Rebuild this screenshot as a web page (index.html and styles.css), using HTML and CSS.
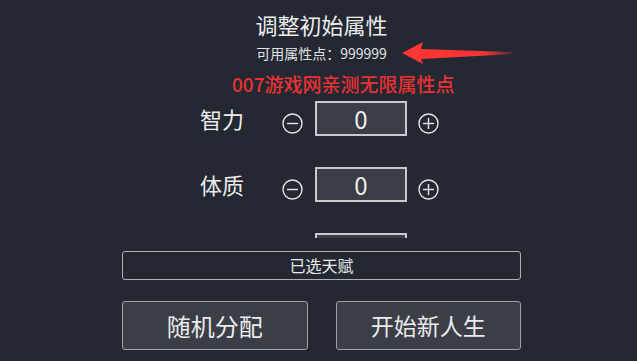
FILE: index.html
```html
<!DOCTYPE html>
<html lang="zh-CN">
<head>
  <meta charset="UTF-8">
  <meta name="viewport" content="width=device-width, initial-scale=1.0">
  <title>调整初始属性</title>
  <link rel="stylesheet" href="styles.css">
</head>
<body>
  <div class="page">
    <h1 class="title">调整初始属性</h1>
    <p class="points">可用属性点：999999</p>

    <div class="attrs">
      <div class="attr-row">
        <span class="attr-name">智力</span>
        <svg class="step minus" viewBox="0 0 21 21"><circle cx="10.5" cy="10.5" r="9.5"/><line x1="5" y1="10.5" x2="16" y2="10.5"/></svg>
        <div class="attr-value">0</div>
        <svg class="step plus" viewBox="0 0 21 21"><circle cx="10.5" cy="10.5" r="9.5"/><line x1="5" y1="10.5" x2="16" y2="10.5"/><line x1="10.5" y1="5" x2="10.5" y2="16"/></svg>
      </div>
      <div class="attr-row">
        <span class="attr-name">体质</span>
        <svg class="step minus" viewBox="0 0 21 21"><circle cx="10.5" cy="10.5" r="9.5"/><line x1="5" y1="10.5" x2="16" y2="10.5"/></svg>
        <div class="attr-value">0</div>
        <svg class="step plus" viewBox="0 0 21 21"><circle cx="10.5" cy="10.5" r="9.5"/><line x1="5" y1="10.5" x2="16" y2="10.5"/><line x1="10.5" y1="5" x2="10.5" y2="16"/></svg>
      </div>
      <!-- 下一行只露出输入框的上边 -->
      <div class="attr-row">
        <span class="attr-name"></span>
        <svg class="step minus" viewBox="0 0 21 21"><circle cx="10.5" cy="10.5" r="9.5"/><line x1="5" y1="10.5" x2="16" y2="10.5"/></svg>
        <div class="attr-value"></div>
        <svg class="step plus" viewBox="0 0 21 21"><circle cx="10.5" cy="10.5" r="9.5"/><line x1="5" y1="10.5" x2="16" y2="10.5"/><line x1="10.5" y1="5" x2="10.5" y2="16"/></svg>
      </div>
    </div>

    <div class="talents">已选天赋</div>

    <div class="actions">
      <button class="btn">随机分配</button>
      <button class="btn btn-start">开始新人生</button>
    </div>
  </div>

  <!-- 水印和箭头 -->
  <div class="watermark">007游戏网亲测无限属性点</div>
  <svg class="arrow" width="116" height="26" viewBox="0 0 116 26">
    <defs>
      <linearGradient id="fade" x1="0" y1="0" x2="1" y2="0">
        <stop offset="0" stop-color="#ff3535"/>
        <stop offset="0.75" stop-color="#f83434"/>
        <stop offset="1" stop-color="#f83434" stop-opacity="0.2"/>
      </linearGradient>
    </defs>
    <polygon points="2,13 23,2 21,9 113,12 113,14 21,19 23,24" fill="url(#fade)"/>
  </svg>
</body>
</html>
```

FILE: styles.css
```css
body {
  margin: 0;
  padding: 0;
  background-color: #232833;
  color: #e8e8e8;
  font-family: "Noto Sans CJK SC", "Noto Sans", sans-serif;
  height: 361px;
  overflow: hidden;
}
.page {
  width: 399px;
  margin-left: 122px;
  padding-top: 11px;
}
.title {
  margin: 0;
  font-size: 22px;
  line-height: 26px;
  font-weight: normal;
  text-align: center;
  color: #ececec;
}
.points {
  margin: 7px 0 0;
  font-size: 14px;
  line-height: 18px;
  text-align: center;
  color: #e2e2e2;
}
.attrs {
  margin-top: 39px;
  height: 137px;
  overflow: hidden;
}
.attr-row {
  display: flex;
  align-items: center;
  height: 35px;
  padding-left: 78px;
  margin-bottom: 31px;
}
.attr-name {
  width: 44px;
  font-size: 22px;
  line-height: 35px;
  color: #ececec;
}
.step {
  width: 21px;
  height: 21px;
  margin-top: 9px;
  fill: none;
  stroke: #e6e6e6;
  stroke-width: 1.4;
}
.minus {
  margin-left: 38px;
}
.plus {
  margin-left: 11px;
}
.attr-value {
  box-sizing: border-box;
  width: 92px;
  height: 35px;
  margin-left: 12px;
  border: 2px solid #c9cacd;
  background-color: #3b3e47;
  font-size: 24px;
  line-height: 31px;
  text-align: center;
  color: #eeeeee;
}
.talents {
  box-sizing: border-box;
  margin-top: 13px;
  height: 29px;
  border: 1px solid #aeb0b4;
  border-radius: 3px;
  font-size: 16px;
  line-height: 27px;
  text-align: center;
  color: #e8e8e8;
}
.actions {
  display: flex;
  gap: 28px;
  margin-top: 21px;
}
.btn {
  box-sizing: border-box;
  flex: 1;
  height: 49px;
  padding: 0;
  border: 1px solid #9fa1a6;
  border-radius: 3px;
  background-color: #3b3e47;
  color: #ebebeb;
  font-family: "Noto Sans CJK SC", "Noto Sans", sans-serif;
  font-size: 24px;
  line-height: 47px;
}
.btn-start {
  font-size: 23px;
}
.watermark {
  position: absolute;
  left: 232px;
  top: 73px;
  font-size: 19px;
  line-height: 22px;
  font-weight: 500;
  color: #ea3232;
  white-space: nowrap;
}
.arrow {
  position: absolute;
  left: 400px;
  top: 40px;
}
```
